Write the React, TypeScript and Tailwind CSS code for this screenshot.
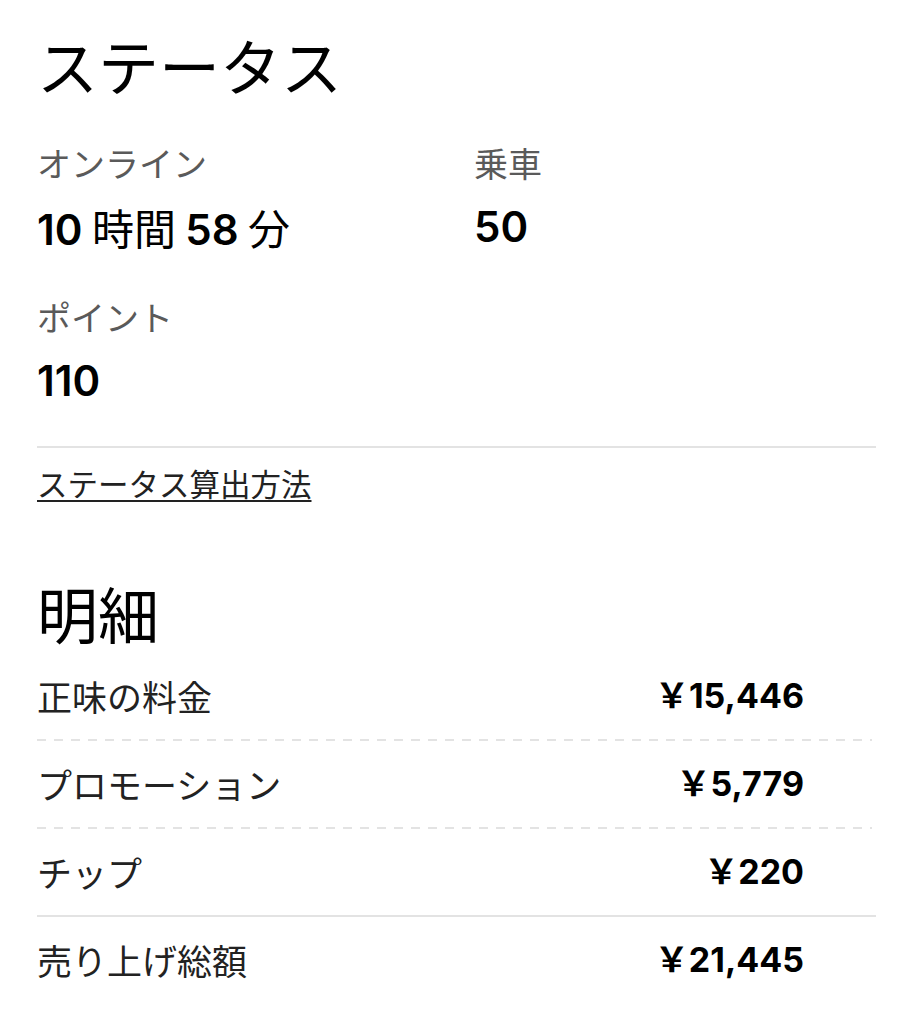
const JP = "font-['Noto_Sans_CJK_JP',sans-serif]";
const NUM = "font-['Inter','Noto_Sans_CJK_JP',sans-serif]";

const STATS = [
  { label: "オンライン", value: ["10", " 時間 ", "58", " 分"] },
  { label: "乗車", value: ["50"] },
  { label: "ポイント", value: ["110"] },
];

const ROWS: { label: string; amount: string; solid?: boolean }[] = [
  { label: "正味の料金", amount: "15,446" },
  { label: "プロモーション", amount: "5,779" },
  { label: "チップ", amount: "220", solid: true },
  { label: "売り上げ総額", amount: "21,445" },
];

function Dashed() {
  return (
    <div className="h-[2px] mr-[4px] bg-[repeating-linear-gradient(to_right,#e3e3e3_0_9px,transparent_9px_17px)]" />
  );
}

function StatValue({ parts }: { parts: string[] }) {
  return (
    <div className={`${NUM} mt-[18px] text-[42px] leading-[48px] font-semibold text-black whitespace-pre`}>
      {parts.map((p, i) =>
        i % 2 === 1 ? (
          <span key={i} className={`${JP} font-normal`}>
            {p}
          </span>
        ) : (
          <span key={i}>{p}</span>
        ),
      )}
    </div>
  );
}

export default function App() {
  return (
    <div className={`${JP} min-h-screen bg-white pl-[37px] pr-[35px] pt-[30px] text-black`}>
      <h1 className="text-[61px] leading-[70px] font-normal">ステータス</h1>

      <div className="mt-[41px] grid grid-cols-[437px_1fr] gap-y-[41px]">
        {STATS.map((s) => (
          <div key={s.label}>
            <div className="text-[34px] leading-[44px] text-[#5a5a5a]">{s.label}</div>
            <StatValue parts={s.value} />
          </div>
        ))}
      </div>

      <div className="mt-[41px] h-[2px] bg-[#e3e3e3]" />

      <a href="#" className="mt-[15px] block w-fit text-[30.5px] leading-[40px] text-[#222] underline underline-offset-[4px] decoration-[2px]">
        ステータス算出方法
      </a>

      <h2 className="mt-[75px] text-[61px] leading-[70px] font-normal">明細</h2>

      <div className="mt-[5px]">
        {ROWS.map((r, i) => (
          <div key={r.label}>
            <div className="flex items-center justify-between py-[20px] pr-[72px]">
              <span className="text-[35px] leading-[46px] text-[#222]">{r.label}</span>
              <span className={`${NUM} text-[34px] leading-[46px] font-bold text-black`}>
                ￥{r.amount}
              </span>
            </div>
            {i < ROWS.length - 1 &&
              (r.solid ? <div className="h-[2px] bg-[#e3e3e3]" /> : <Dashed />)}
          </div>
        ))}
      </div>
    </div>
  );
}
